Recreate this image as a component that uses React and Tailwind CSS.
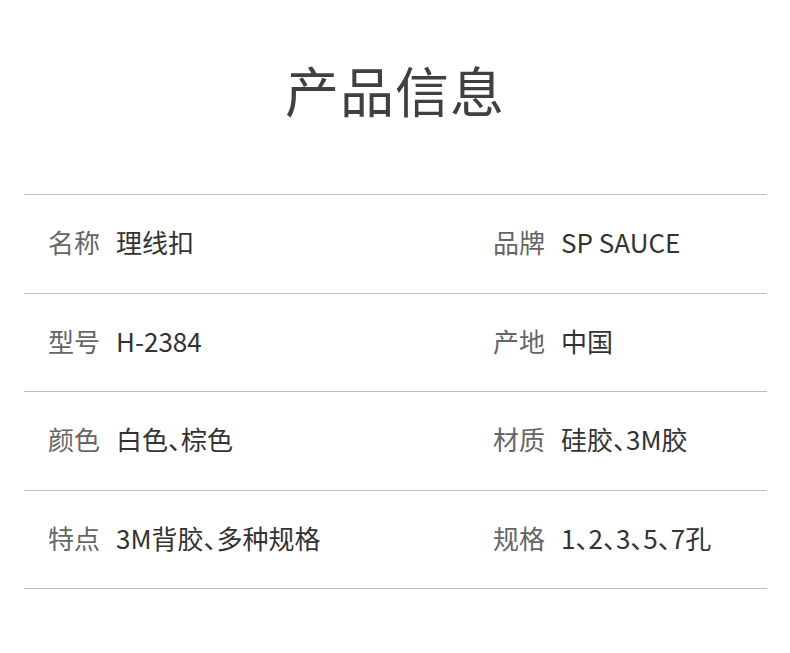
import React from 'react';

const rows = [
    { left: ['名称', '理线扣'], right: ['品牌', 'SP SAUCE'], h: 'h-[99px]' },
    { left: ['型号', 'H-2384'], right: ['产地', '中国'], h: 'h-[98px]' },
    { left: ['颜色', '白色、棕色'], right: ['材质', '硅胶、3M胶'], h: 'h-[99px]' },
    { left: ['特点', '3M背胶、多种规格'], right: ['规格', '1、2、3、5、7孔'], h: 'h-[98px]' },
];

const Cell = ({ label, value }) => (
    <div className="flex items-center gap-[16px] pl-6 text-[26px] leading-none pb-[4px]">
        <span className="text-[#666666]">{label}</span>
        <span className="text-[#333333] [font-feature-settings:'halt']">{value}</span>
    </div>
);

const App = () => {
    return (
        <div className="w-[790px] h-[653px] bg-white" style={{ fontFamily: '"Noto Sans CJK SC", "Noto Sans", sans-serif' }}>
            <div className="h-[194px] flex items-center justify-center pb-[14px]">
                <h1 className="text-[54px] leading-none text-[#404040] tracking-[1px]">产品信息</h1>
            </div>
            <div className="ml-6 w-[743px] border-t border-[#bdbdbd]">
                {rows.map((r, i) => (
                    <div key={i} className={`grid grid-cols-[445px_1fr] items-center border-b border-[#bdbdbd] ${r.h}`}>
                        <Cell label={r.left[0]} value={r.left[1]} />
                        <Cell label={r.right[0]} value={r.right[1]} />
                    </div>
                ))}
            </div>
        </div>
    );
};

export default App;
